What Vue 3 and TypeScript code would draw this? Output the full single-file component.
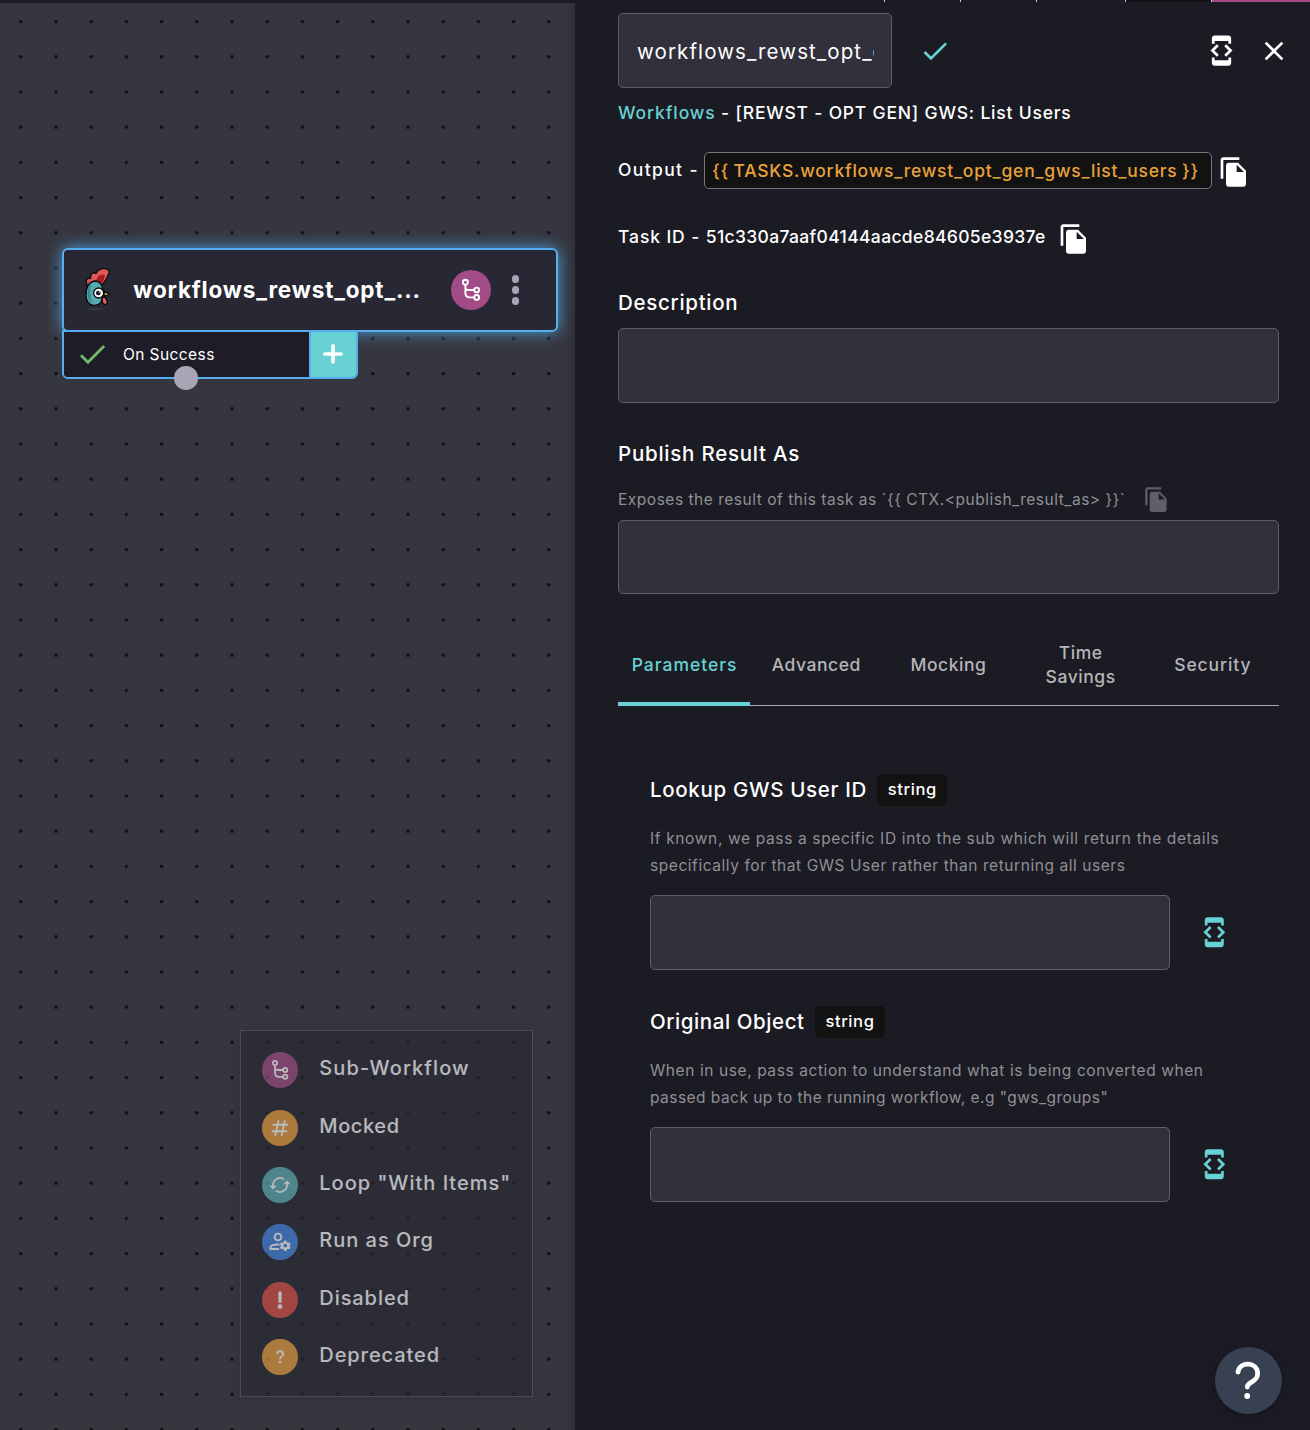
<script setup lang="ts">
import { ref } from 'vue'

interface LegendItem {
  label: string
  kind: 'sub' | 'mock' | 'loop' | 'org' | 'disabled' | 'deprecated'
  spacing: number
}
interface Param {
  label: string
  spacing: number
  type: string
  lines: { text: string; spacing: number }[]
}

const taskName = ref('workflows_rewst_opt_gen_gws_list_users')
const output = '{{ TASKS.workflows_rewst_opt_gen_gws_list_users }}'
const publishHelp = 'Exposes the result of this task as `{{ CTX.<publish_result_as> }}`'

const legend: LegendItem[] = [
  { label: 'Sub-Workflow', kind: 'sub', spacing: 1.12 },
  { label: 'Mocked', kind: 'mock', spacing: 0.6 },
  { label: 'Loop "With Items"', kind: 'loop', spacing: 1.0 },
  { label: 'Run as Org', kind: 'org', spacing: 0.98 },
  { label: 'Disabled', kind: 'disabled', spacing: 0.93 },
  { label: 'Deprecated', kind: 'deprecated', spacing: 0.92 },
]

const tabs = [
  { label: 'Parameters', spacing: 1.0 },
  { label: 'Advanced', spacing: 0.55 },
  { label: 'Mocking', spacing: 0.55 },
  { label: 'Time Savings', spacing: 0.55 },
  { label: 'Security', spacing: 0.9 },
]
const activeTab = ref('Parameters')

const params: Param[] = [
  {
    label: 'Lookup GWS User ID',
    spacing: 0.67,
    type: 'string',
    lines: [
      { text: 'If known, we pass a specific ID into the sub which will return the details', spacing: 0.64 },
      { text: 'specifically for that GWS User rather than returning all users', spacing: 0.56 },
    ],
  },
  {
    label: 'Original Object',
    spacing: 0.58,
    type: 'string',
    lines: [
      { text: 'When in use, pass action to understand what is being converted when', spacing: 0.59 },
      { text: 'passed back up to the running workflow, e.g "gws_groups"', spacing: 0.46 },
    ],
  },
]

const checkPath = 'M9 16.17 4.83 12l-1.42 1.41L9 19 21 7l-1.41-1.41z'
const copyPath =
  'M16 1H4c-1.1 0-2 .9-2 2v14h2V3h12V1zm-1 4l6 6v10c0 1.1-.9 2-2 2H7.99C6.89 23 6 22.1 6 21l.01-14c0-1.1.89-2 1.99-2h7zm-1 7h5.5L14 6.5V12z'
const devPath =
  'M7 5h10v2h2V3c0-1.1-.9-1.99-2-1.99L7 1c-1.1 0-2 .9-2 2v4h2V5zm8.41 11.59L20 12l-4.59-4.59L14 8.83 17.17 12 14 15.17l1.41 1.42zM10 15.17L6.83 12 10 8.83 8.59 7.41 4 12l4.59 4.59L10 15.17zM17 19H7v-2H5v4c0 1.1.9 2 2 2h10c1.1 0 2-.9 2-2v-4h-2v2z'
const closePath =
  'M19 6.41 17.59 5 12 10.59 6.41 5 5 6.41 10.59 12 5 17.59 6.41 19 12 13.41 17.59 19 19 17.59 13.41 12z'
const gearPath =
  'M-1.1 -5h2.2l.4 1.5 1.3.75 1.5-.45 1.1 1.9-1.1 1.1v.8l1.1 1.1-1.1 1.9-1.5-.45-1.3.75-.4 1.5h-2.2l-.4-1.5-1.3-.75-1.5.45-1.1-1.9 1.1-1.1v-.8l-1.1-1.1 1.1-1.9 1.5.45 1.3-.75z M0 -1.9a1.9 1.9 0 1 0 0 3.8a1.9 1.9 0 1 0 0-3.8z'
</script>

<template>
  <div class="app">
    <div class="top-strip">
      <i class="tick t1"></i><i class="tick t2"></i><i class="tick t3"></i><i class="tick t4"></i>
      <span class="seg dark"></span><span class="seg magenta"></span>
    </div>

    <main class="canvas">
      <svg class="grid" width="575" height="1427">
        <defs>
          <pattern id="dots" x="19.1" y="17" width="35.2" height="35.2" patternUnits="userSpaceOnUse">
            <rect x="0.1" y="0.1" width="3.2" height="3.2" rx="0.8" fill="#101012" />
          </pattern>
        </defs>
        <rect width="575" height="1427" fill="url(#dots)" />
      </svg>

      <section class="node">
        <div class="node-head">
          <svg class="rooster" viewBox="100 95 90 140" width="30" height="46.67">
            <ellipse cx="138" cy="224" rx="27" ry="4" fill="#33343f" />
            <g stroke="#0c0c10" stroke-width="4" stroke-linejoin="round">
              <path d="M111 152 L110 137 Q116 129 122 133 L125 119 Q133 113 139 118 Q146 101 166 103 Q181 105 178 117 Q172 134 158 151 L136 156 Z" fill="#dc5a55" />
              <path d="M131 146 Q141 139 146 124 Q155 120 166 121 Q164 138 156 149 L140 152 Z" fill="#a81d22" stroke="none" />
              <path d="M134 140 Q156 140 160 166 Q161 188 154 204 Q145 214 131 213 Q110 208 109 184 Q108 146 134 140Z" fill="#56a9ad" />
              <path d="M123 148 Q114 160 114 181 Q116 201 127 207 Q119 182 123 148Z" fill="#3b8589" stroke="none" />
              <path d="M162 170 L180 180 L164 186 Z" fill="#e0a13c" />
              <path d="M158 190 Q166 185 169 194 Q178 207 167 211 Q155 210 158 190Z" fill="#e0605c" />
              <circle cx="147" cy="176" r="15" fill="#fff" />
            </g>
            <circle cx="146" cy="176" r="7" fill="#0c0c10" />
            <circle cx="149" cy="173" r="2.4" fill="#fff" />
          </svg>
          <span class="node-title">workflows_rewst_opt_...</span>
          <span class="badge-sub">
            <svg viewBox="-20 -20 40 40" width="40" height="40" fill="none" stroke="#fff" stroke-width="1.9">
              <circle cx="-5.6" cy="-7.7" r="2.5" />
              <circle cx="5.7" cy="0" r="2.4" />
              <circle cx="5.7" cy="7.4" r="2.4" />
              <path d="M-5.6-5.2V3q0 4.4 4.4 4.4H3.3M-5.6-2.6q0 2.6 3 2.6H3.3" />
            </svg>
          </span>
          <span class="kebab"><i></i><i></i><i></i></span>
        </div>
        <div class="node-foot">
          <div class="outcome">
            <svg viewBox="0 0 24 24" width="34.5" height="34.5"><path :d="checkPath" fill="#72b768" /></svg>
            <span>On Success</span>
          </div>
          <div class="add">
            <svg viewBox="0 0 20 20" width="20" height="20"><path d="M10 1.9v16.2M1.9 10h16.2" stroke="#fff" stroke-width="3.6" stroke-linecap="round" /></svg>
          </div>
        </div>
        <i class="handle"></i>
      </section>

      <aside class="legend">
        <div v-for="item in legend" :key="item.kind" class="legend-row">
          <span class="dot" :class="item.kind">
            <svg viewBox="-18 -18 36 36" width="36" height="36" fill="none" stroke="#fff" stroke-width="1.8">
              <g v-if="item.kind === 'sub'">
                <circle cx="-5" cy="-7" r="2.1" />
                <circle cx="5.2" cy="0" r="2.1" />
                <circle cx="5.2" cy="6.8" r="2.1" />
                <path d="M-5-4.8V2.8q0 4 4 4H3M-5-2.4q0 2.4 2.8 2.4H3" />
              </g>
              <g v-else-if="item.kind === 'mock'" stroke-width="1.9" stroke-linecap="round">
                <path d="M-1.6-7-4.6 7M4.7-7 1.7 7M-6.6-3.2H7.6M-7.6 3.2H6.6" />
              </g>
              <g v-else-if="item.kind === 'loop'">
                <path d="M-6.8 1.5A7 7 0 0 1 4.2-5.6M6.8-1.5A7 7 0 0 1-4.2 5.6" />
                <path d="M-10.6 .8h7.2L-7 4.6zM10.6-.8H3.4L7-4.6z" fill="#fff" stroke="none" />
              </g>
              <g v-else-if="item.kind === 'org'" stroke-width="1.9">
                <circle cx="-2" cy="-5" r="3.4" />
                <path d="M-.4 2.6Q-9.6 1.8-9.6 6V7H-1" />
                <path :d="gearPath" transform="translate(5.3 3.6)" fill="#fff" fill-rule="evenodd" stroke="none" />
              </g>
              <g v-else-if="item.kind === 'disabled'">
                <path d="M0-7V1.3" stroke-width="3.4" stroke-linecap="round" />
                <circle cx="0" cy="6.5" r="2.3" fill="#fff" stroke="none" />
              </g>
              <g v-else>
                <path d="M-3.2-3.2C-2.8-6.6 3.2-6.7 3.2-3.1 3.2-.6 0-.6 0 2.2" stroke-width="1.8" />
                <circle cx="0" cy="5.2" r="1.3" fill="#fff" stroke="none" />
              </g>
            </svg>
          </span>
          <span class="legend-label" :style="{ letterSpacing: item.spacing + 'px' }">{{ item.label }}</span>
        </div>
      </aside>
    </main>

    <section class="panel">
      <header class="head">
        <input class="name" :value="taskName" />
        <svg class="confirm" viewBox="0 0 24 24" width="32" height="32"><path :d="checkPath" fill="#67d1d3" /></svg>
        <span class="grow"></span>
        <svg viewBox="0 0 24 24" width="33" height="33"><path :d="devPath" fill="#fff" /></svg>
        <svg class="close" viewBox="0 0 24 24" width="32" height="32"><path :d="closePath" fill="#fff" /></svg>
      </header>

      <div class="row crumb"><a>Workflows</a><span> - [REWST - OPT GEN] GWS: List Users</span></div>

      <div class="row output">
        <span class="output-label">Output -</span>
        <code>{{ output }}</code>
        <svg viewBox="0 0 24 24" width="32" height="32"><path :d="copyPath" fill="#fff" /></svg>
      </div>

      <div class="row task">
        <span class="task-id"><span class="task-key">Task ID - </span>51c330a7aaf04144aacde84605e3937e</span>
        <svg viewBox="0 0 24 24" width="32" height="32"><path :d="copyPath" fill="#fff" /></svg>
      </div>

      <h3 class="desc-title">Description</h3>
      <div class="box"></div>

      <h3 class="pub-title">Publish Result As</h3>
      <div class="row help">
        <span>{{ publishHelp }}</span>
        <svg viewBox="0 0 24 24" width="27" height="27"><path :d="copyPath" fill="#5f6067" /></svg>
      </div>
      <div class="box publish"></div>

      <nav class="tabs">
        <button
          v-for="tab in tabs"
          :key="tab.label"
          class="tab"
          :class="{ active: tab.label === activeTab }"
          :style="{ letterSpacing: tab.spacing + 'px' }"
          @click="activeTab = tab.label"
        >{{ tab.label }}</button>
      </nav>

      <div class="params">
        <article v-for="p in params" :key="p.label" class="param">
          <div class="param-head">
            <h3 :style="{ letterSpacing: p.spacing + 'px' }">{{ p.label }}</h3>
            <span class="type">{{ p.type }}</span>
          </div>
          <p>
            <span v-for="l in p.lines" :key="l.text" :style="{ letterSpacing: l.spacing + 'px' }">{{ l.text }}</span>
          </p>
          <div class="param-input">
            <div class="box"></div>
            <svg viewBox="0 0 24 24" width="32.6" height="32.6"><path :d="devPath" fill="#67d1d3" /></svg>
          </div>
        </article>
      </div>

      <button class="fab">
        <svg viewBox="0 0 67 67" width="67" height="67" fill="none">
          <path d="M23 25C25 13.8 42.6 14.6 42.6 26.6 42.6 36 32.3 34 32.3 40" stroke="#fff" stroke-width="4.8" stroke-linecap="round" />
          <circle cx="32.2" cy="49" r="2.9" fill="#fff" />
        </svg>
      </button>
    </section>
  </div>
</template>

<style>
body {
  background: #1b1b24;
}
</style>

<style scoped>
.app {
  position: relative;
  display: grid;
  grid-template: 3px 1427px / 575px 735px;
  width: 1310px;
  height: 1430px;
  overflow: hidden;
  background: #1b1b24;
  color: #fff;
  font-family: Inter, "Liberation Sans", sans-serif;
}
svg {
  display: block;
  flex: none;
}
.top-strip {
  grid-column: 1 / 3;
  position: relative;
  background: #1c1b27;
}
.tick {
  position: absolute;
  top: 0;
  width: 1px;
  height: 2px;
  background: #c8c8cf;
}
.t1 { left: 884px; }
.t2 { left: 960px; }
.t3 { left: 1036px; }
.t4 { left: 1125px; }
.seg {
  position: absolute;
  top: 0;
  height: 2px;
}
.dark { left: 1126px; width: 85px; background: #121212; }
.magenta { left: 1211px; width: 99px; background: #a24b87; border-left: 1px solid #c8c8cf; box-sizing: border-box; }

.canvas {
  position: relative;
  overflow: hidden;
  background: #36363f;
}
.canvas::after {
  content: '';
  position: absolute;
  inset: 0 0 0 auto;
  width: 9px;
  background: linear-gradient(90deg, rgba(27, 27, 36, 0), rgba(27, 27, 36, 0.22));
}
.grid {
  position: absolute;
  inset: 0;
}

.node {
  position: absolute;
  left: 62px;
  top: 245px;
  width: 496px;
}
.node-head {
  display: flex;
  align-items: center;
  box-sizing: border-box;
  height: 83.5px;
  border: 2px solid #57aeee;
  border-radius: 6px;
  background: #272833;
  box-shadow: 0 0 16px 0 #4da0da;
}
.rooster {
  margin: -1px 0 0 19.3px;
}
.node-title {
  width: 300px;
  margin: -1px 0 0 20px;
  font-size: 22.5px;
  font-weight: 700;
  letter-spacing: 0.82px;
  white-space: nowrap;
}
.badge-sub {
  width: 40px;
  height: 40px;
  margin-left: 17.7px;
  border-radius: 50%;
  background: #a24b87;
}
.kebab {
  display: flex;
  flex-direction: column;
  gap: 3.4px;
  margin-left: 20.8px;
}
.kebab i {
  width: 7.6px;
  height: 7.6px;
  border-radius: 50%;
  background: #a6a6b5;
}
.node-foot {
  position: relative;
  display: flex;
  box-sizing: border-box;
  width: 296px;
  height: 49px;
  margin-top: -2px;
  border: 2px solid #57aeee;
  border-radius: 0 0 6px 6px;
  overflow: hidden;
}
.outcome {
  display: flex;
  align-items: center;
  box-sizing: border-box;
  width: 244.6px;
  padding-left: 10.6px;
  background: #1e1c27;
  font-size: 15.5px;
  letter-spacing: 0.42px;
}
.outcome span {
  margin: 0 0 0 13.9px;
}
.add {
  display: flex;
  flex: 1;
  align-items: center;
  justify-content: center;
  border-left: 2px solid #57aeee;
  background: #67d1d3;
}
.handle {
  position: absolute;
  left: 112.3px;
  top: 118px;
  width: 23.6px;
  height: 23.6px;
  border-radius: 50%;
  background: #a6a6b5;
}

.legend {
  position: absolute;
  left: 240px;
  top: 1027px;
  box-sizing: border-box;
  width: 293px;
  height: 367px;
  padding: 10.5px 0 0 21px;
  border: 1px solid #58585e;
  background: #272833;
  box-shadow: 0 2px 8px rgba(0, 0, 0, 0.15);
  opacity: 0.65;
}
.legend-row {
  display: flex;
  align-items: center;
  height: 57.4px;
}
.dot {
  width: 36px;
  height: 36px;
  border-radius: 50%;
}
.sub { background: #a24b87; }
.mock, .deprecated { background: #e9a13b; }
.loop { background: #5bb0b3; }
.org { background: #4187e0; }
.disabled { background: #dc5047; }
.legend-label {
  margin: -4px 0 0 21.3px;
  font-size: 20px;
  font-weight: 500;
  white-space: nowrap;
}

.panel {
  position: relative;
  display: flex;
  flex-direction: column;
  padding: 10px 31px 0 43px;
  font-size: 17.5px;
  font-weight: 500;
}
.head {
  display: flex;
  align-items: center;
  height: 75px;
  margin-right: -21px;
}
.name {
  box-sizing: border-box;
  width: 274px;
  height: 75px;
  padding: 1px 17px 0 18px;
  border: 1px solid #5d5d6b;
  border-radius: 5px;
  outline: none;
  background: #31303b;
  color: #fff;
  font: 400 20.5px Inter, sans-serif;
  letter-spacing: 1.1px;
}
.confirm {
  margin-left: 26.5px;
}
.grow {
  flex: 1;
}
.close {
  margin: 0 10.5px 0 20px;
}
.row {
  display: flex;
  align-items: center;
  white-space: pre;
}
.crumb {
  box-sizing: border-box;
  height: 50px;
  padding-bottom: 2px;
  letter-spacing: 0.79px;
}
.crumb a {
  color: #67d1d3;
  letter-spacing: 0.92px;
}
.output {
  height: 65px;
}
.output-label {
  width: 86px;
  margin-top: -2px;
  letter-spacing: 1.36px;
}
.output code {
  box-sizing: border-box;
  width: 508px;
  height: 37px;
  padding-left: 7px;
  border: 1px solid #77777b;
  border-radius: 5px;
  background: #121212;
  color: #e9a13b;
  font: inherit;
  line-height: 36px;
  letter-spacing: 0.79px;
  word-spacing: -1px;
}
.output svg {
  margin: 3px 0 0 6px;
}
.task {
  height: 70px;
  letter-spacing: 0.34px;
}
.task-id {
  width: 440px;
  margin-top: -3px;
}
.task-key {
  letter-spacing: 0.9px;
}
.task svg {
  margin-top: 2px;
}
h3 {
  margin: 0;
  font-size: 20.5px;
  font-weight: 500;
}
.desc-title {
  height: 55px;
  line-height: 60px;
  letter-spacing: 0.7px;
}
.box {
  box-sizing: border-box;
  height: 75px;
  border: 1px solid #5d5d6b;
  border-radius: 5px;
  background: #31303b;
}
.box.publish {
  height: 74px;
}
.pub-title {
  height: 75px;
  line-height: 102px;
  letter-spacing: 0.76px;
}
.help {
  height: 42px;
  color: #909094;
  font-size: 15.5px;
  font-weight: 400;
  letter-spacing: 0.52px;
}
.help span {
  width: 524.5px;
}
.tabs {
  display: flex;
  box-sizing: border-box;
  height: 112px;
  border-bottom: 1px solid #a6a6b5;
}
.tab {
  box-sizing: border-box;
  flex: 0 0 20%;
  height: 112px;
  padding: 33px 24px 0;
  border: 0;
  border-bottom: 4px solid transparent;
  background: none;
  color: #b5b5b8;
  font: inherit;
  line-height: 24px;
}
.tab.active {
  padding-left: 1px;
  padding-right: 0;
  border-color: #67d1d3;
  color: #67d1d3;
}
.tab:nth-child(2) {
  padding-left: 18px;
  padding-right: 18px;
}
.params {
  padding: 68px 32px 0;
}
.param {
  height: 232px;
}
.param-head {
  display: flex;
  align-items: center;
  height: 32px;
}
.param-head h3 {
  margin-top: -2px;
}
.type {
  box-sizing: border-box;
  width: 70px;
  height: 32px;
  margin-left: 10.3px;
  border-radius: 5px;
  background: #121212;
  font-size: 16.5px;
  line-height: 31px;
  letter-spacing: 0.6px;
  text-align: center;
}
.param p {
  margin: 20px 0 16px;
  color: #909094;
  font-size: 15.5px;
  font-weight: 400;
  line-height: 26.5px;
}
.param p span {
  display: block;
  white-space: nowrap;
}
.param-input {
  display: flex;
  align-items: center;
}
.param-input .box {
  width: 520px;
}
.param-input svg {
  margin-left: 27.5px;
}
.fab {
  position: absolute;
  right: 28px;
  bottom: 16.5px;
  width: 67px;
  height: 67px;
  padding: 0;
  border: 0;
  border-radius: 50%;
  background: #374151;
  box-shadow: 0 2px 8px rgba(0, 0, 0, 0.25);
}
</style>
